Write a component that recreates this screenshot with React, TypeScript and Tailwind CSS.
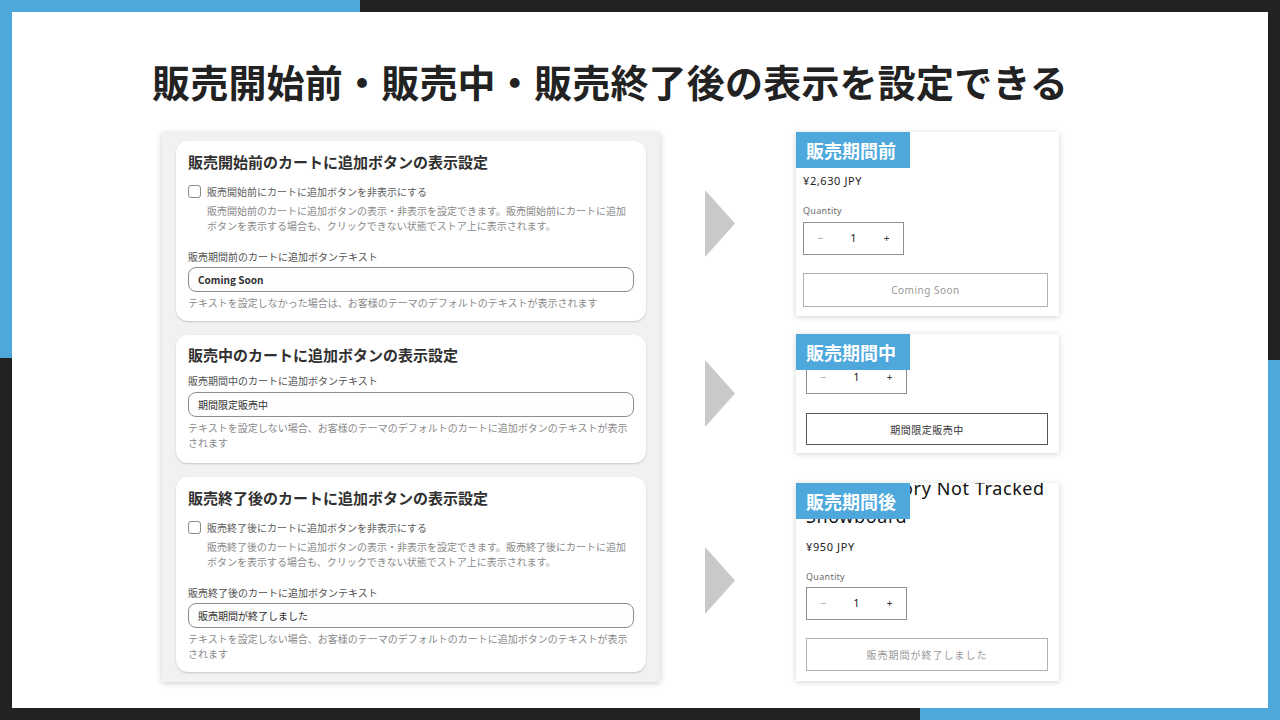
import React from 'react';

const BLUE = 'bg-[#4ea8dc]';

type Section = {
  title: string;
  checkbox?: { label: string; desc: string[] };
  fieldLabel: string;
  value: string;
  valueBold?: boolean;
  help: string[];
};

const sections: Section[] = [
  {
    title: '販売開始前のカートに追加ボタンの表示設定',
    checkbox: {
      label: '販売開始前にカートに追加ボタンを非表示にする',
      desc: [
        '販売開始前のカートに追加ボタンの表示・非表示を設定できます。販売開始前にカートに追加',
        'ボタンを表示する場合も、クリックできない状態でストア上に表示されます。',
      ],
    },
    fieldLabel: '販売期間前のカートに追加ボタンテキスト',
    value: 'Coming Soon',
    valueBold: true,
    help: ['テキストを設定しなかった場合は、お客様のテーマのデフォルトのテキストが表示されます'],
  },
  {
    title: '販売中のカートに追加ボタンの表示設定',
    fieldLabel: '販売期間中のカートに追加ボタンテキスト',
    value: '期間限定販売中',
    help: [
      'テキストを設定しない場合、お客様のテーマのデフォルトのカートに追加ボタンのテキストが表示',
      'されます',
    ],
  },
  {
    title: '販売終了後のカートに追加ボタンの表示設定',
    checkbox: {
      label: '販売終了後にカートに追加ボタンを非表示にする',
      desc: [
        '販売終了後のカートに追加ボタンの表示・非表示を設定できます。販売終了後にカートに追加',
        'ボタンを表示する場合も、クリックできない状態でストア上に表示されます。',
      ],
    },
    fieldLabel: '販売終了後のカートに追加ボタンテキスト',
    value: '販売期間が終了しました',
    help: [
      'テキストを設定しない場合、お客様のテーマのデフォルトのカートに追加ボタンのテキストが表示',
      'されます',
    ],
  },
];

const SettingsCard: React.FC<{ s: Section }> = ({ s }) => (
  <div
    className={`bg-white rounded-[12px] shadow-[0_1px_2px_rgba(0,0,0,0.18)] px-[12px] ${
      s.checkbox ? 'pt-[11px] pb-[11px]' : 'pt-[10px] pb-[13px]'
    }`}
  >
    <h3 className="text-[15px] leading-[20px] font-bold text-[#303030]">{s.title}</h3>
    {s.checkbox && (
      <div className="mt-[12px]">
        <div className="flex items-center h-[15px] gap-[6px]">
          <span className="w-[13px] h-[13px] rounded-[3px] border border-[#8a8a8a] bg-white shrink-0" />
          <span className="text-[10px] leading-[15px] text-[#5c5c5c]">{s.checkbox.label}</span>
        </div>
        <div className="mt-[4px] pl-[19px] text-[10px] leading-[15px] text-[#8a8a8a]">
          {s.checkbox.desc.map((d) => (
            <p key={d}>{d}</p>
          ))}
        </div>
      </div>
    )}
    <p className={`${s.checkbox ? 'mt-[17px]' : 'mt-[9px]'} text-[10px] leading-[14px] text-[#505050]`}>
      {s.fieldLabel}
    </p>
    <div
      className={`${s.checkbox ? 'mt-[3px]' : 'mt-[4px]'} h-[25px] rounded-[8px] border border-[#8d8d8d] bg-[#fdfdfd] flex items-center px-[9px]`}
    >
      <span className={`text-[10px] text-[#303030] ${s.valueBold ? 'font-bold' : ''}`}>{s.value}</span>
    </div>
    <div className="mt-[3px] text-[10px] leading-[15px] text-[#8a8a8a]">
      {s.help.map((h) => (
        <p key={h}>{h}</p>
      ))}
    </div>
  </div>
);

const Arrow: React.FC<{ className?: string }> = ({ className }) => (
  <svg width="30" height="67" viewBox="0 0 30 67" className={className}>
    <polygon points="0,0 30,33.5 0,67" fill="#c9c9c9" />
  </svg>
);

const Badge: React.FC<{ label: string }> = ({ label }) => (
  <div className={`absolute left-0 top-0 h-[36px] w-[114px] ${BLUE} flex items-center pl-[10px]`}>
    <span className="text-[18px] leading-none font-bold text-white">{label}</span>
  </div>
);

const Qty: React.FC = () => (
  <div className="w-[101px] h-[33px] border border-[#8f8f8f] grid grid-cols-3 items-center text-center text-[10px] font-['Noto_Sans','Noto_Sans_CJK_JP',sans-serif]">
    <span className="text-[#9a9a9a]">−</span>
    <span className="text-[#222] text-[11px]">1</span>
    <span className="text-[#333]">+</span>
  </div>
);

const Price: React.FC<{ v: string }> = ({ v }) => (
  <p className="text-[11px] leading-[14px] tracking-[0.6px] text-[#222] font-['Noto_Sans',sans-serif]">{v}</p>
);

const QtyLabel: React.FC = () => (
  <p className="text-[9px] leading-[12px] tracking-[0.3px] text-[#6a6a6a] font-['Noto_Sans',sans-serif]">Quantity</p>
);

export default function App() {
  return (
    <div className="relative w-[1280px] h-[720px] bg-[#222222] overflow-hidden p-[12px] font-['Noto_Sans_CJK_JP',sans-serif]">
      <div className={`absolute left-0 top-0 w-[360px] h-[12px] ${BLUE}`} />
      <div className={`absolute left-0 top-0 w-[12px] h-[358px] ${BLUE}`} />
      <div className={`absolute right-0 bottom-0 w-[360px] h-[12px] ${BLUE}`} />
      <div className={`absolute right-0 bottom-0 w-[12px] h-[360px] ${BLUE}`} />

      <div className="relative w-[1256px] h-[696px] bg-white pt-[50px] pl-[140px]">
        <h1 className="text-[38px] leading-[38px] font-bold text-[#222] tracking-[0.2px]">
          販売開始前・販売中・販売終了後の表示を設定できる
        </h1>

        <div className="flex items-start mt-[32px] pl-[10px]">
          {/* settings panel */}
          <div className="mt-[1px] w-[498px] h-[549px] bg-[#f1f1f1] shadow-[0_1px_6px_rgba(0,0,0,0.22)] px-[14px] pt-[8px] flex flex-col gap-[14px]">
            {sections.map((s) => (
              <SettingsCard key={s.title} s={s} />
            ))}
          </div>

          {/* arrows */}
          <div className="ml-[45px] flex flex-col">
            <Arrow className="mt-[58px]" />
            <Arrow className="mt-[103px]" />
            <Arrow className="mt-[120px]" />
          </div>

          {/* storefront previews */}
          <div className="ml-[61px] w-[263px] flex flex-col">
            <div className="relative h-[184px] bg-white shadow-[0_1px_6px_rgba(0,0,0,0.18)] overflow-hidden pl-[7px] pr-[11px] pt-[42px]">
              <Price v="¥2,630 JPY" />
              <div className="mt-[17px]">
                <QtyLabel />
              </div>
              <div className="mt-[5px]">
                <Qty />
              </div>
              <div className="mt-[18px] h-[34px] border border-[#b0b0b0] flex items-center justify-center text-[10px] tracking-[0.5px] text-[#999] font-['Noto_Sans',sans-serif]">
                Coming Soon
              </div>
              <Badge label="販売期間前" />
            </div>

            <div className="relative mt-[18px] h-[119px] bg-white shadow-[0_1px_6px_rgba(0,0,0,0.18)] overflow-hidden pl-[10px] pr-[11px] pt-[27px]">
              <div className="w-[100px]">
                <Qty />
              </div>
              <div className="mt-[19px] h-[32px] border border-[#555] flex items-center justify-center text-[10px] tracking-[0.5px] text-[#333]">
                期間限定販売中
              </div>
              <Badge label="販売期間中" />
            </div>

            <div className="relative mt-[30px] h-[198px] bg-white shadow-[0_1px_6px_rgba(0,0,0,0.18)] overflow-hidden pl-[10px] pr-[11px]">
              <div className="-mt-[9px] text-[18px] leading-[28px] tracking-[0.6px] text-[#121212] whitespace-nowrap font-['Noto_Sans',sans-serif]">
                <p>The Inventory Not Tracked</p>
                <p>Snowboard</p>
              </div>
              <div className="mt-[10px]">
                <Price v="¥950 JPY" />
              </div>
              <div className="mt-[17px]">
                <QtyLabel />
              </div>
              <div className="mt-[4px] w-[100px]">
                <Qty />
              </div>
              <div className="mt-[18px] h-[33px] border border-[#b0b0b0] flex items-center justify-center text-[10px] tracking-[1px] text-[#999]">
                販売期間が終了しました
              </div>
              <Badge label="販売期間後" />
            </div>
          </div>
        </div>
      </div>
    </div>
  );
}
